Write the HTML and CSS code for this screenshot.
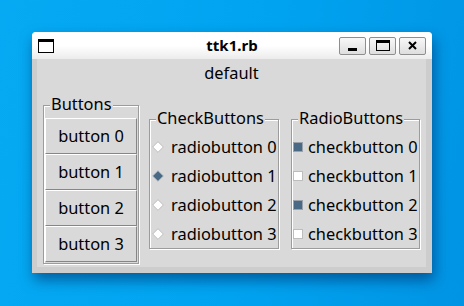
FILE: index.html
```html
<!DOCTYPE html>
<html lang="en">
<head>
  <meta charset="UTF-8" />
  <title>ttk1.rb</title>
  <link rel="stylesheet" href="styles.css">
</head>
<body>

  <div class="window">
    <div class="titlebar">
      <div class="app-icon"></div>
      <div class="title">ttk1.rb</div>
      <div class="wm-buttons">
        <div class="wm-btn wm-min"><span class="ico-min"></span></div>
        <div class="wm-btn"><span class="ico-max"></span></div>
        <div class="wm-btn">
          <svg width="9" height="9" viewBox="0 0 9 9">
            <path d="M1 1 L8 8 M8 1 L1 8" stroke="#000" stroke-width="2" fill="none"/>
          </svg>
        </div>
      </div>
    </div>

    <div class="client">
      <div class="heading">default</div>

      <div class="frames">
        <div class="lframe lf-buttons">
          <span class="lf-title">Buttons</span>
          <div class="tk-button">button 0</div>
          <div class="tk-button">button 1</div>
          <div class="tk-button">button 2</div>
          <div class="tk-button">button 3</div>
        </div>

        <div class="lframe lf-checks">
          <span class="lf-title">CheckButtons</span>
          <div class="opt">
            <svg class="diamond" width="12" height="12" viewBox="0 0 12 12"><polygon points="6,0.7 11.3,6 6,11.3 0.7,6"/></svg>
            radiobutton 0
          </div>
          <div class="opt">
            <svg class="diamond on" width="12" height="12" viewBox="0 0 12 12"><polygon points="6,0.7 11.3,6 6,11.3 0.7,6"/></svg>
            radiobutton 1
          </div>
          <div class="opt">
            <svg class="diamond" width="12" height="12" viewBox="0 0 12 12"><polygon points="6,0.7 11.3,6 6,11.3 0.7,6"/></svg>
            radiobutton 2
          </div>
          <div class="opt">
            <svg class="diamond" width="12" height="12" viewBox="0 0 12 12"><polygon points="6,0.7 11.3,6 6,11.3 0.7,6"/></svg>
            radiobutton 3
          </div>
        </div>

        <div class="lframe lf-radios">
          <span class="lf-title">RadioButtons</span>
          <div class="opt"><span class="box on"></span>checkbutton 0</div>
          <div class="opt"><span class="box"></span>checkbutton 1</div>
          <div class="opt"><span class="box on"></span>checkbutton 2</div>
          <div class="opt"><span class="box"></span>checkbutton 3</div>
        </div>
      </div>
    </div>
  </div>

</body>
</html>
```

FILE: styles.css
```css
body {
  margin: 0;
  width: 464px;
  height: 306px;
  overflow: hidden;
  font-family: 'Noto Sans', sans-serif;
  color: #000;
  background: linear-gradient(100deg, #06aaf3 0%, #00a3f0 55%, #0094e4 100%);
}

.window {
  width: 400px;
  height: 241px;
  margin: 32px 0 0 32px;
  display: flex;
  flex-direction: column;
  background: #cdcdcd;
  border-radius: 4px 4px 0 0;
  box-shadow: 2px 7px 14px rgba(0, 35, 90, 0.55);
}

.titlebar {
  height: 27px;
  display: grid;
  grid-template-columns: 1fr auto 1fr;
  align-items: center;
  padding: 0 6px;
  background: linear-gradient(#ffffff 0%, #ffffff 50%, #ececec 100%);
  border-radius: 4px 4px 0 0;
}

.app-icon {
  width: 14px;
  height: 10px;
  border: 1px solid #000;
  border-top: 3px solid #000;
  background: #fff;
  margin-top: 1px;
}

.title {
  font-size: 15px;
  font-weight: bold;
  line-height: 27px;
}

.wm-buttons {
  display: flex;
  justify-content: flex-end;
  gap: 3px;
}

.wm-btn {
  width: 25px;
  height: 16px;
  border: 1px solid #8e8e8e;
  border-radius: 2px;
  background: linear-gradient(#f8f8f8, #dedede);
  display: flex;
  align-items: center;
  justify-content: center;
}

.wm-min {
  align-items: flex-end;
}

.ico-min {
  width: 9px;
  height: 3px;
  background: #000;
  margin-bottom: 3px;
}

.ico-max {
  width: 12px;
  height: 7px;
  border: 1px solid #000;
  border-top: 3px solid #000;
}

.client {
  flex: 1;
  margin: 0 6px 6px 5px;
  background: #d9d9d9;
  display: flex;
  flex-direction: column;
  font-size: 16.4px;
}

.heading {
  height: 28px;
  line-height: 28px;
  text-align: center;
}

.frames {
  flex: 1;
  display: flex;
  align-items: center;
  padding: 5px 0 0 6px;
}

.lframe {
  position: relative;
  box-sizing: border-box;
  margin-top: 9px;
  border: 1px solid #9c9c9c;
  box-shadow: inset 1px 1px 0 #fff, 1px 1px 0 #fff;
}

.lf-title {
  position: absolute;
  top: -11px;
  left: 6px;
  padding: 0 1px;
  line-height: 18px;
  background: #d9d9d9;
}

.lf-buttons {
  width: 96px;
  padding: 12px 1px 1px 1px;
}

.tk-button {
  box-sizing: border-box;
  height: 36px;
  line-height: 34px;
  text-align: center;
  border: 1px solid;
  border-color: #fff #868686 #868686 #fff;
}

.lf-checks {
  width: 130px;
  margin-left: 10px;
  padding: 12px 0 0 2px;
}

.lf-radios {
  width: 129px;
  margin-left: 12px;
  padding: 12px 0 0 1px;
}

.opt {
  height: 29px;
  display: flex;
  align-items: center;
  white-space: nowrap;
}

.diamond {
  margin-right: 7px;
}

.diamond polygon {
  fill: #fff;
  stroke: #b4b4b4;
  stroke-width: 0.8;
}

.diamond.on polygon {
  fill: #4a6984;
  stroke: #a9b5c0;
}

.box {
  box-sizing: border-box;
  width: 10px;
  height: 10px;
  margin-right: 5px;
  background: #fff;
  border: 1px solid #bdbdbd;
}

.box.on {
  background: #4a6984;
  border-color: #9aa3ab;
}
```
